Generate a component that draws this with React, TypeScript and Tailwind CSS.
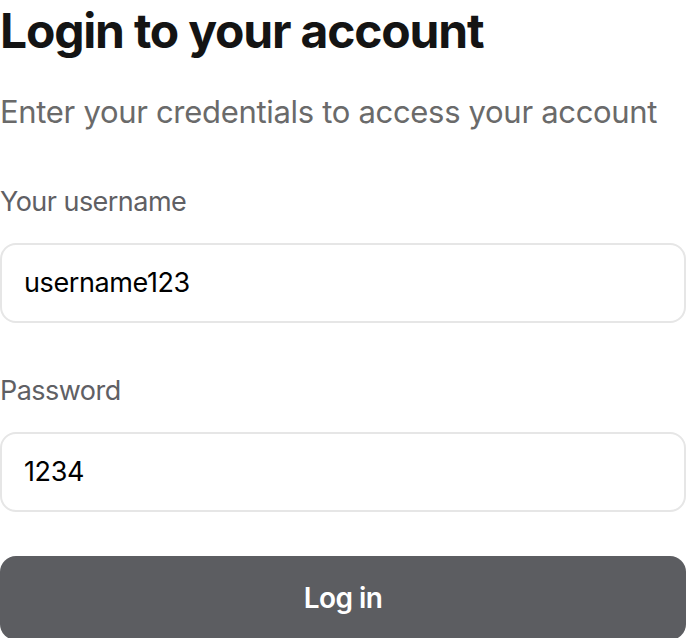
import React from "react";

const Field = ({ label, value }: { label: string; value: string }) => (
  <div className="flex flex-col">
    <label className="text-[27px] leading-[32px] text-[#5f6064] tracking-[-0.02em]">{label}</label>
    <div className="mt-[25px] h-[80px] rounded-[16px] border-2 border-[#e6e6e6] bg-white flex items-center px-[22px]">
      <span className="text-[27px] text-black tracking-[-0.015em]">{value}</span>
    </div>
  </div>
);

export default function App() {
  return (
    <div className="w-[686px] h-[638px] overflow-hidden bg-white" style={{ fontFamily: "Inter, 'Noto Sans', sans-serif" }}>
      <div className="flex flex-col">
        <h1 className="text-[48px] leading-[60px] font-bold text-[#141414] tracking-[-0.025em] mt-[1px]">
          Login to your account
        </h1>
        <p className="mt-[33px] text-[31px] leading-[36px] text-[#6a6a6a] tracking-[-0.01em]">
          Enter your credentials to access your account
        </p>
        <div className="mt-[56px] flex flex-col gap-[52px]">
          <Field label="Your username" value="username123" />
          <Field label="Password" value="1234" />
        </div>
        <button className="mt-[44px] h-[84px] rounded-[16px] bg-[#5c5d61] text-white text-[28px] font-semibold tracking-[-0.02em]">
          Log in
        </button>
      </div>
    </div>
  );
}
